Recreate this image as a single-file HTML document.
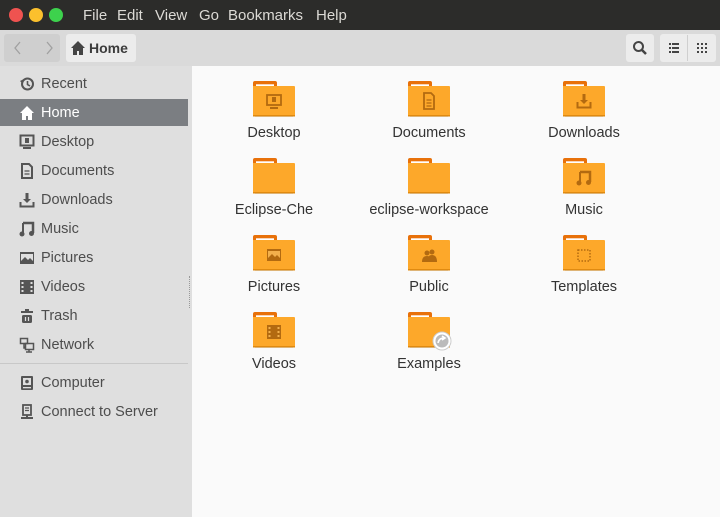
<!DOCTYPE html>
<html><head><style>
*{margin:0;padding:0;box-sizing:border-box}
body{width:720px;height:517px;overflow:hidden;font-family:"Liberation Sans","DejaVu Sans",sans-serif;background:#dcdcdc;position:relative}
#title{position:absolute;left:0;top:0;width:720px;height:30px;background:#2c2c2a}
.dot{position:absolute;top:8px;width:14px;height:14px;border-radius:50%}
.menu{position:absolute;top:7px;color:#dcdad5;font-size:15px}
#tool{position:absolute;left:0;top:30px;width:720px;height:36px;background:#dadada}
.btn{position:absolute;background:#ececec;border-radius:3px}
#side{position:absolute;left:0;top:66px;width:192px;height:451px;background:#dfdfdf}
.si{position:absolute;left:0;width:188px;height:27px;font-size:14.5px;color:#4d4d4d}
.si span{position:absolute;left:41px;top:6px}
.si svg{position:absolute;left:19px;top:6px}
#main{position:absolute;left:192px;top:66px;width:528px;height:451px;background:#fafafa}
.f{position:absolute;width:150px;text-align:center}
.f svg{display:block;margin:0 auto}
.f div{font-size:14.5px;color:#333;margin-top:8px}
</style></head><body>
<div id="title">
<div class="dot" style="left:9px;background:#ef5350"></div>
<div class="dot" style="left:29px;background:#fbc02d"></div>
<div class="dot" style="left:49px;background:#3dd24d"></div>
<div class="menu" style="left:83px">File</div>
<div class="menu" style="left:117px">Edit</div>
<div class="menu" style="left:155px">View</div>
<div class="menu" style="left:199px">Go</div>
<div class="menu" style="left:228px">Bookmarks</div>
<div class="menu" style="left:316px">Help</div>
</div>
<div id="tool">
<div class="btn" style="left:4px;top:4px;width:56px;height:28px;background:#cfcfcf"></div>
<svg style="position:absolute;left:12px;top:10px" width="44" height="16"><path d="M8 2 L3 8 L8 14" fill="none" stroke="#a0a0a0" stroke-width="1.3"/><path d="M35 2 L40 8 L35 14" fill="none" stroke="#a0a0a0" stroke-width="1.3"/></svg>
<div class="btn" style="left:66px;top:4px;width:70px;height:28px"></div>
<svg style="position:absolute;left:70px;top:10px" width="16" height="16"><path d="M8 1 L1 8 H3 V15 H7 V11 H9 V15 H13 V8 H15 Z" fill="#444"/></svg>
<div style="position:absolute;left:89px;top:10px;font-weight:bold;font-size:14px;color:#3c3c3c">Home</div>
<div class="btn" style="left:626px;top:4px;width:28px;height:28px"></div>
<svg style="position:absolute;left:632px;top:10px" width="16" height="16"><circle cx="6.5" cy="6.5" r="4.5" fill="none" stroke="#444" stroke-width="2"/><path d="M10 10 L14 14" stroke="#444" stroke-width="2.5"/></svg>
<div class="btn" style="left:660px;top:4px;width:56px;height:28px"></div>
<div style="position:absolute;left:687px;top:5px;width:1px;height:26px;background:#cfcfcf"></div>
<svg style="position:absolute;left:668px;top:12px" width="12" height="12"><g fill="#444"><rect x="1" y="1" width="2" height="2"/><rect x="4" y="1" width="7" height="2"/><rect x="1" y="5" width="2" height="2"/><rect x="4" y="5" width="7" height="2"/><rect x="1" y="9" width="2" height="2"/><rect x="4" y="9" width="7" height="2"/></g></svg>
<svg style="position:absolute;left:696px;top:12px" width="12" height="12"><g fill="#444"><rect x="1" y="1" width="2" height="2"/><rect x="5" y="1" width="2" height="2"/><rect x="9" y="1" width="2" height="2"/><rect x="1" y="5" width="2" height="2"/><rect x="5" y="5" width="2" height="2"/><rect x="9" y="5" width="2" height="2"/><rect x="1" y="9" width="2" height="2"/><rect x="5" y="9" width="2" height="2"/><rect x="9" y="9" width="2" height="2"/></g></svg>
</div>
<div id="side">
<div class="si" style="top:4px"><svg width="16" height="16"><circle cx="8.5" cy="8" r="5.5" fill="none" stroke="#555" stroke-width="2"/><path d="M8.5 5 V8.5 L11 10" fill="none" stroke="#555" stroke-width="1.6"/><path d="M1 5 L4 8 L5 3 Z" fill="#555"/></svg><span>Recent</span></div>
<div class="si" style="top:33px;background:#7b7e82;color:#fff"><svg width="16" height="16"><path d="M8 1 L1 8 H3 V15 H7 V11 H9 V15 H13 V8 H15 Z" fill="#fff"/></svg><span>Home</span></div>
<div class="si" style="top:62px"><svg width="16" height="16"><rect x="1.5" y="1.5" width="13" height="10" fill="none" stroke="#555" stroke-width="2"/><rect x="6" y="4" width="4" height="5" fill="#555"/><rect x="4" y="13" width="8" height="2" fill="#555"/></svg><span>Desktop</span></div>
<div class="si" style="top:91px"><svg width="16" height="16"><path d="M3 1 H10 L13 4 V15 H3 Z" fill="none" stroke="#555" stroke-width="2"/><path d="M5.5 8 H10.5 M5.5 11 H10.5" stroke="#555" stroke-width="1.3"/></svg><span>Documents</span></div>
<div class="si" style="top:120px"><svg width="16" height="16"><path d="M6.5 1 H9.5 V7 H12 L8 11 L4 7 H6.5 Z" fill="#555"/><path d="M1.5 10 V14.5 H14.5 V10" fill="none" stroke="#555" stroke-width="2"/></svg><span>Downloads</span></div>
<div class="si" style="top:149px"><svg width="16" height="16"><path d="M4 2 H14 V12" fill="none" stroke="#555" stroke-width="2.5"/><path d="M4 2 V12" stroke="#555" stroke-width="2"/><circle cx="3" cy="13" r="2.5" fill="#555"/><circle cx="12.5" cy="12.5" r="2.5" fill="#555"/></svg><span>Music</span></div>
<div class="si" style="top:178px"><svg width="16" height="16"><rect x="1" y="2" width="14" height="12" fill="#555"/><path d="M2 11 L6 7 L9 10 L11 8 L14 11 V4 H2 Z" fill="#dfdfdf"/></svg><span>Pictures</span></div>
<div class="si" style="top:207px"><svg width="16" height="16"><rect x="1" y="1" width="14" height="14" fill="#555"/><g fill="#dfdfdf"><rect x="2.5" y="3" width="2" height="2"/><rect x="2.5" y="7" width="2" height="2"/><rect x="2.5" y="11" width="2" height="2"/><rect x="11.5" y="3" width="2" height="2"/><rect x="11.5" y="7" width="2" height="2"/><rect x="11.5" y="11" width="2" height="2"/></g></svg><span>Videos</span></div>
<div class="si" style="top:236px"><svg width="16" height="16"><path d="M6 1 H10 V3 H14 V5 H2 V3 H6 Z" fill="#555"/><rect x="3" y="7" width="10" height="8" rx="1.5" fill="#555"/><path d="M6.5 9 V13 M9.5 9 V13" stroke="#dfdfdf" stroke-width="1.2"/></svg><span>Trash</span></div>
<div class="si" style="top:265px"><svg width="16" height="16"><rect x="1.5" y="1.5" width="7" height="5" fill="none" stroke="#555" stroke-width="1.5"/><rect x="6.5" y="6.5" width="8" height="6" fill="none" stroke="#555" stroke-width="1.5"/><path d="M5 7 V11 H6 M10 13 V15 M7 15 H13" stroke="#555" stroke-width="1.5"/></svg><span>Network</span></div>
<div style="position:absolute;left:0;top:297px;width:188px;height:1px;background:#c8c8c8"></div>
<div class="si" style="top:303px"><svg width="16" height="16"><rect x="2" y="1" width="12" height="14" rx="1" fill="#555"/><rect x="4" y="3" width="8" height="7" fill="#dfdfdf"/><circle cx="8" cy="6.5" r="1.8" fill="#555"/><rect x="4" y="12" width="8" height="1.3" fill="#dfdfdf"/></svg><span>Computer</span></div>
<div class="si" style="top:332px"><svg width="16" height="16"><rect x="4" y="1" width="8" height="10" fill="none" stroke="#555" stroke-width="1.8"/><path d="M6 4 H10 M6 6.5 H10" stroke="#555" stroke-width="1.2"/><path d="M8 11 V13 M2 14 H14" stroke="#555" stroke-width="2"/></svg><span>Connect to Server</span></div>
<div style="position:absolute;left:189px;top:210px;width:2px;height:32px;border-left:1px dotted #999"></div>
</div>
<div id="main"></div>
<svg width="0" height="0" style="position:absolute"><defs>
<symbol id="fd" viewBox="0 0 42 36"><path d="M0 2 Q0 0 2 0 H22 Q24 0 24 2 V5 H0 Z" fill="#e8710a"/><rect x="3" y="3.3" width="18" height="2.5" fill="#fff"/><path d="M0 5 H24 V5 Q24 5 26 5 H41 Q42 5 42 6 V34 H0 Z" fill="#fda82a"/><rect x="0" y="34" width="42" height="1.5" fill="#e08a10"/><rect x="2" y="35.5" width="38" height="0.8" fill="#ddd"/></symbol>
</defs></svg>
<div class="f" style="left:199px;top:81px"><svg width="42" height="36"><use href="#fd"/><g fill="none" stroke="#b36a10" stroke-width="1.8"><rect x="14" y="14" width="14" height="10"/></g><rect x="19" y="16" width="4" height="5" fill="#b36a10"/><rect x="17" y="26" width="8" height="2" fill="#b36a10"/></svg><div>Desktop</div></div>
<div class="f" style="left:354px;top:81px"><svg width="42" height="36"><use href="#fd"/><path d="M16 12 H23 L26 15 V28 H16 Z" fill="none" stroke="#b36a10" stroke-width="1.8"/><path d="M18.5 19 H23.5 M18.5 22 H23.5 M18.5 25 H23.5" stroke="#b36a10" stroke-width="1.2"/></svg><div>Documents</div></div>
<div class="f" style="left:509px;top:81px"><svg width="42" height="36"><use href="#fd"/><path d="M19.5 13 H22.5 V19 H25 L21 23 L17 19 H19.5 Z" fill="#b36a10"/><path d="M14.5 21 V26.5 H27.5 V21" fill="none" stroke="#b36a10" stroke-width="2"/></svg><div>Downloads</div></div>
<div class="f" style="left:199px;top:158px"><svg width="42" height="36"><use href="#fd"/></svg><div>Eclipse-Che</div></div>
<div class="f" style="left:354px;top:158px"><svg width="42" height="36"><use href="#fd"/></svg><div>eclipse-workspace</div></div>
<div class="f" style="left:509px;top:158px"><svg width="42" height="36"><use href="#fd"/><path d="M17 14 H27 V24" fill="none" stroke="#b36a10" stroke-width="2.5"/><path d="M17 14 V24" stroke="#b36a10" stroke-width="2"/><circle cx="16" cy="25" r="2.5" fill="#b36a10"/><circle cx="25.5" cy="24.5" r="2.5" fill="#b36a10"/></svg><div>Music</div></div>
<div class="f" style="left:199px;top:235px"><svg width="42" height="36"><use href="#fd"/><rect x="14" y="14" width="14" height="12" fill="#b36a10"/><path d="M15 23 L19 19 L22 22 L24 20 L27 23 V16 H15 Z" fill="#f3b04c"/></svg><div>Pictures</div></div>
<div class="f" style="left:354px;top:235px"><svg width="42" height="36"><use href="#fd"/><circle cx="19" cy="18" r="2.5" fill="#b36a10"/><circle cx="24" cy="17" r="2.5" fill="#b36a10"/><path d="M14 27 Q14 21 19 21 Q24 21 24 27 Z M21 21 Q22 20 24 20 Q29 20 29 27 H24 Z" fill="#b36a10"/></svg><div>Public</div></div>
<div class="f" style="left:509px;top:235px"><svg width="42" height="36"><use href="#fd"/><rect x="15" y="15" width="12" height="11" fill="none" stroke="#b36a10" stroke-width="1.5" stroke-dasharray="1.5 1.5"/></svg><div>Templates</div></div>
<div class="f" style="left:199px;top:312px"><svg width="42" height="36"><use href="#fd"/><rect x="14" y="13" width="14" height="14" fill="#b36a10"/><g fill="#f3b04c"><rect x="15.5" y="15" width="2" height="2"/><rect x="15.5" y="19" width="2" height="2"/><rect x="15.5" y="23" width="2" height="2"/><rect x="24.5" y="15" width="2" height="2"/><rect x="24.5" y="19" width="2" height="2"/><rect x="24.5" y="23" width="2" height="2"/></g></svg><div>Videos</div></div>
<div class="f" style="left:354px;top:312px"><svg width="46" height="40" style="margin-left:54px"><use href="#fd" width="42" height="36"/><circle cx="34" cy="29" r="9" fill="#fff" stroke="#ccc"/><circle cx="34" cy="29" r="6.5" fill="#bbb"/><path d="M30 31 Q31 26 36 26 M34 24 L37 26 L34 28" fill="none" stroke="#fff" stroke-width="1.6"/></svg><div style="margin-top:4px">Examples</div></div>
</body></html>
